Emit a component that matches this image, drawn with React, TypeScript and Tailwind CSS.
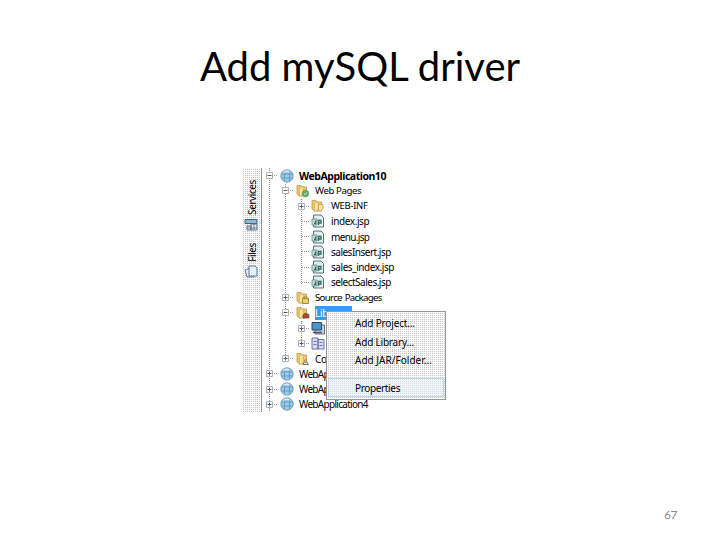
import React from 'react';

type IconKind = 'web' | 'pages' | 'info' | 'jsp' | 'source' | 'libs' | 'jdk' | 'server' | 'config';

interface TreeRow {
  label: string;
  depth: number;
  icon: IconKind;
  toggle?: '+' | '-';
  text?: string;
  selected?: boolean;
}

const rows: TreeRow[] = [
  { label: 'WebApplication10', depth: 0, icon: 'web', toggle: '-', text: 'font-bold text-[10.5px] tracking-[-0.47px]' },
  { label: 'Web Pages', depth: 1, icon: 'pages', toggle: '-', text: 'text-[9.7px] tracking-[-0.42px] word-spacing-1' },
  { label: 'WEB-INF', depth: 2, icon: 'info', toggle: '+', text: 'text-[9.5px] tracking-[-0.3px]' },
  { label: 'index.jsp', depth: 2, icon: 'jsp', text: 'tracking-[-0.4px]' },
  { label: 'menu.jsp', depth: 2, icon: 'jsp', text: 'tracking-[-0.65px]' },
  { label: 'salesInsert.jsp', depth: 2, icon: 'jsp', text: 'tracking-[-0.5px]' },
  { label: 'sales_index.jsp', depth: 2, icon: 'jsp', text: 'tracking-[-0.45px]' },
  { label: 'selectSales.jsp', depth: 2, icon: 'jsp', text: 'tracking-[-0.5px]' },
  { label: 'Source Packages', depth: 1, icon: 'source', toggle: '+', text: 'text-[9.7px] tracking-[-0.7px] [word-spacing:1px]' },
  { label: 'Lib', depth: 1, icon: 'libs', toggle: '-', selected: true },
  { label: '', depth: 2, icon: 'jdk', toggle: '+' },
  { label: '', depth: 2, icon: 'server', toggle: '+' },
  { label: 'Co', depth: 1, icon: 'config', toggle: '+' },
  { label: 'WebAp', depth: 0, icon: 'web', toggle: '+', text: 'tracking-[-0.7px]' },
  { label: 'WebAp', depth: 0, icon: 'web', toggle: '+', text: 'tracking-[-0.7px]' },
  { label: 'WebApplication4', depth: 0, icon: 'web', toggle: '+', text: 'tracking-[-0.7px]' },
];

const menuItems = [
  { label: 'Add Project...', text: 'tracking-[-0.15px]' },
  { label: 'Add Library...', text: 'tracking-[-0.2px]' },
  { label: 'Add JAR/Folder...', text: 'tracking-[0.02px]' },
];

// 2px dither: one grey pixel on white
const dither =
  'bg-[#c6c6c6] bg-[linear-gradient(#fafafa_50%,transparent_50%),linear-gradient(90deg,#fafafa_50%,transparent_50%)] bg-[size:2px_2px]';

function Folder() {
  return (
    <>
      <path d="M1 1.500h4l1 1.500h4.500v9H3.500L1 10z" fill="#edc868" stroke="#bd9850" strokeWidth=".8" />
      <path d="M3.500 12.500V4L7 2.500v8z" fill="#fbe3a0" stroke="#c5a14f" strokeWidth=".5" />
    </>
  );
}

function NodeIcon({ kind }: { kind: IconKind }) {
  return (
    <svg width="14" height="14" viewBox="0 0 14 14" className="shrink-0">
      {kind === 'web' && (
        <>
          <circle cx="7" cy="7" r="6.2" fill="#9ccbe8" stroke="#7795ab" strokeWidth=".9" />
          <path d="M1 5h12M1 9h12M4.500 2v10M9.500 2v10" stroke="#5d97c0" strokeWidth=".9" fill="none" />
          <path d="M3.500 3.500q3-2.500 6-.5" stroke="#e4f3fc" strokeWidth="1.200" fill="none" />
        </>
      )}
      {(kind === 'pages' || kind === 'info' || kind === 'source' || kind === 'libs' || kind === 'config') && <Folder />}
      {kind === 'pages' && (
        <>
          <circle cx="9.500" cy="9.500" r="3.200" fill="#62b06a" stroke="#4b8a55" strokeWidth=".6" />
          <path d="M8 9.500l1.300 1L11 8.500" stroke="#d9f2d6" strokeWidth=".9" fill="none" />
        </>
      )}
      {kind === 'info' && <path d="M7.500 5.500h4.500v4l-2 2.500H7.500z" fill="#fbe3a0" stroke="#c5a14f" strokeWidth=".8" />}
      {kind === 'source' && <path d="M6.500 7.500h6v5h-6zM8 7.500V6h3v1.500" fill="#ead072" stroke="#9c8236" strokeWidth=".9" />}
      {kind === 'libs' && <path d="M7 9l2-2 4 1.500V12H7z" fill="#a9483d" stroke="#6e3530" strokeWidth=".6" />}
      {kind === 'config' && <path d="M7 12.500L9.500 7.500l3 5zM9 10.500h1.500" fill="#f3ecd0" stroke="#79694a" strokeWidth=".9" />}
      {kind === 'jsp' && (
        <>
          <path d="M2.500 1h7.500L12.500 3.500V13h-10z" fill="#e0edf1" stroke="#56717f" />
          <path d="M1 5h5v6H1z" fill="#c6dedb" stroke="#5f878c" strokeWidth=".8" />
          <path d="M3 9.500h1.500v-3M7.500 11V6.500H10V9H7.500" stroke="#2f7050" strokeWidth="1.300" fill="none" />
        </>
      )}
      {kind === 'jdk' && (
        <>
          <path d="M4 4h9.500v9H4z" fill="#c8d0dc" stroke="#566273" strokeWidth=".9" />
          <path d="M1 1.500h9.500V9H1z" fill="#4a97ca" stroke="#34475a" />
          <path d="M2 11.500h9" stroke="#46566b" strokeWidth="1.500" />
        </>
      )}
      {kind === 'server' && (
        <>
          <path d="M1 2h6v11H1zM7 3.500h6V13H7z" fill="#d9dcf6" stroke="#6068a0" strokeWidth=".9" />
          <path d="M2.500 5.500h3M2.500 8.500h3M8.500 6.500h3M8.500 9.500h3" stroke="#7078ac" />
        </>
      )}
    </svg>
  );
}

function Toggle({ sign }: { sign?: '+' | '-' }) {
  return (
    <svg width="14" height="15" viewBox="0 0 14 15" className="shrink-0">
      <path d="M4 7.500h8" stroke="#9a9a9a" strokeDasharray="1 1" />
      {sign && (
        <>
          <path d="M.5 4.500h6v6h-6z" fill="#fff" stroke="#a9b0b8" />
          <path d={sign === '+' ? 'M1.500 7.500h4M3.500 5.500v4' : 'M1.500 7.500h4'} stroke="#46607e" />
        </>
      )}
    </svg>
  );
}

function Guides() {
  return (
    <svg width="40" height="244" viewBox="0 0 40 244" className="absolute left-[7px] top-0">
      <path d="M.5 0v243M16.500 16v175M32.500 31v85M32.500 153v23" stroke="#8f8f8f" strokeDasharray="1 1" fill="none" />
    </svg>
  );
}

function SideTab({ label, database }: { label: string; database?: boolean }) {
  return (
    <div className="flex flex-col items-center gap-[3px] pt-[12px]">
      <span className="rotate-180 text-[10px] leading-[14px] tracking-[-0.4px] [writing-mode:vertical-rl]">{label}</span>
      <svg width="14" height="13" viewBox="0 0 14 13" className="-ml-[2px]">
        {database ? (
          <>
            <path d="M1 1.500h12v4H1z" fill="#8fb8d6" stroke="#3e6585" />
            <path d="M3 8h4v4H3zM7 6h6v6H7z" fill="#e5eaf0" stroke="#5c728a" />
            <path d="M10 6v6M3 10h10" stroke="#5c728a" strokeWidth=".8" />
          </>
        ) : (
          <path d="M5 1h6l2 2v8H5zM5 3.500L1 5l2 7h7v-1" fill="#e3eff7" stroke="#5b7991" />
        )}
      </svg>
    </div>
  );
}

export default function App() {
  return (
    <div className="flex h-[540px] w-[720px] flex-col bg-white font-['Lato',sans-serif] text-black">
      <h1 className="mt-[38px] h-[58px] text-center text-[40px] leading-[56px]">Add mySQL driver</h1>

      <div className="relative ml-[242px] mt-[72px] flex h-[244px] w-[205px] font-['Noto_Sans',sans-serif]">
        <div className={`w-[20px] border-r border-[#909090] ${dither}`}>
          <SideTab label="Services" database />
          <SideTab label="Files" />
        </div>

        <div className="relative flex-1 text-[10px]">
          <Guides />
          {rows.map((row, i) => (
            <div
              key={i}
              className={`relative flex h-[15.25px] items-center ${row.depth === 0 ? 'pl-[4px]' : row.depth === 1 ? 'pl-[20px]' : 'pl-[36px]'}`}
            >
              <Toggle sign={row.toggle} />
              <div className={row.depth === 2 ? '-ml-px mr-[6px]' : 'mr-[5px]'}>
                <NodeIcon kind={row.icon} />
              </div>
              <span
                className={`whitespace-nowrap leading-[14px] ${row.selected ? 'w-[37px] bg-[#3d97ee] text-white' : ''} ${row.text ?? 'tracking-[-0.3px]'}`}
              >
                {row.label}
              </span>
            </div>
          ))}
        </div>

        {/* Context menu */}
        <div className={`absolute left-[84px] top-[143px] h-[89px] w-[120px] border border-[#979797] pt-[2px] text-[10px] ${dither}`}>
          {menuItems.map((item) => (
            <div key={item.label} className={`h-[18.5px] pl-[28px] leading-[18px] ${item.text}`}>
              {item.label}
            </div>
          ))}
          <div className="mx-px mt-[8px] h-[19px] border border-[#bcd7e8] bg-[#e4f1f8]/60 pl-[26px] leading-[18px] tracking-[-0.35px]">
            Properties
          </div>
        </div>
      </div>

      <div className="mt-[95px] pl-[664px] text-[12px] leading-[16px] tracking-[-0.5px] text-[#8b8b8b]">67</div>
    </div>
  );
}
